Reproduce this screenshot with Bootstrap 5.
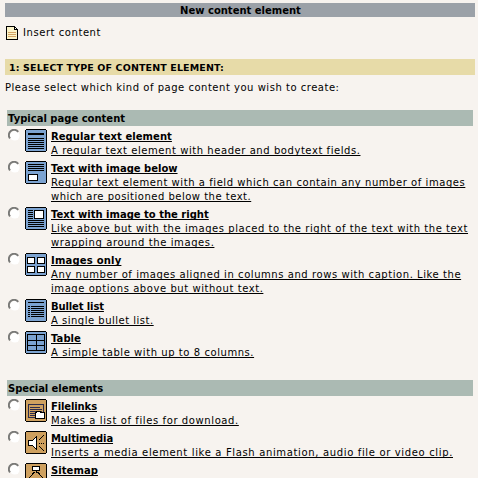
<!DOCTYPE html>
<html lang="en">
<head>
<meta charset="utf-8">
<meta name="viewport" content="width=device-width, initial-scale=1">
<title>New content element</title>
<link href="https://cdn.jsdelivr.net/npm/bootstrap@5.3.0/dist/css/bootstrap.min.css" rel="stylesheet">
<style>
html, body { height: 100%; }
body { font: 10px/14px "DejaVu Sans", sans-serif; letter-spacing: .56px; background: #f7f3ef; color: #000; }
.page { height: 100%; padding: 3px 3px 0 5px; white-space: nowrap; }
b { font-weight: bold; letter-spacing: 0; display: block; }
.titlebar { height: 14px; background: #9ba1a8; padding-top: 1px; letter-spacing: 0; padding-left: 1px; }
.path-row { margin-top: 9px; height: 14px; gap: 5px; padding-left: 1px; }
.step { margin-top: 19px; height: 16px; padding: 2px 4px; background: #e7dba8; font-size: 9.5px; letter-spacing: .125px; }
.intro { margin-top: 6px; letter-spacing: .52px; }
.choices { margin: 15px 2px 0; }
.group-head { height: 16px; padding: 2px 1px; background: #abbab3; letter-spacing: 0; }
.group-head.second { letter-spacing: -.07px; margin-top: 17px; }
.choice { padding: 0 0 4px 1px; color: #000; }
.choices .choice:nth-child(2), .group-head.second + .choice { margin-top: 3px; }
.radio { width: 12px; height: 12px; margin-right: 5px; }
.icon { width: 22px; height: 23px; margin: 0 4px -1px 0; shape-rendering: crispEdges; }
.label { padding-top: 1px; margin-bottom: -1px; text-decoration: underline; text-decoration-thickness: 1px; text-underline-offset: 1px; text-decoration-skip-ink: none; }
.label > * { display: block; height: 14px; }
.label b, .label span { width: max-content; }
.ls-a { letter-spacing: .5px; }
.ls-b { letter-spacing: .6px; }
.ls-c { letter-spacing: .55px; }
.ls-m { letter-spacing: .65px; }
.label b.ls-d { letter-spacing: -.12px; }
.label b.ls-e { letter-spacing: .2px; }
.label b.ls-f { letter-spacing: .06px; }
</style>
</head>
<body class="overflow-hidden">
<svg width="0" height="0" class="position-absolute" aria-hidden="true">
  <defs>
    <symbol id="radio" viewBox="0 0 12 12">
      <circle cx="6.8" cy="6.800" r="4.800" fill="#fff"/>
      <path d="M2 9.400A5 5 0 0 1 10.200 2.800" fill="none" stroke="#7a7a78" stroke-width="2"/>
    </symbol>
    <symbol id="blue" viewBox="0 0 22 23"><path d="M1 0H21V1H22V22H21V23H1V22H0V1H1Z"/><path fill="#7ca3d1" d="M1 1H21V22H1Z"/></symbol>
    <symbol id="tan" viewBox="0 0 22 23"><path d="M1 0H21V1H22V22H21V23H1V22H0V1H1Z"/><path fill="#cea05f" d="M1 1H21V22H1Z"/></symbol>
  </defs>
</svg>
<main class="page">
  <div class="titlebar text-center"><b>New content element</b></div>
  <div class="path-row d-flex align-items-center">
    <svg width="12" height="14" viewBox="0 0 12 14" shape-rendering="crispEdges"><path d="M0 0H9V1H10V2H11V3H12V14H0Z"/><path fill="#fbf3c8" d="M1 1H8V4H11V13H1Z"/><path fill="#fff" d="M9 2H10V3H9Z"/><path fill="#d4a464" d="M2 6H10V7H2ZM2 8H10V9H2ZM2 10H10V11H2Z"/></svg>
    <span>Insert content</span>
  </div>
  <div class="step fw-bold">1: SELECT TYPE OF CONTENT ELEMENT:</div>
  <div class="intro">Please select which kind of page content you wish to create:</div>

  <section class="choices">
    <div class="group-head fw-bold">Typical page content</div>
    <a class="choice d-flex align-items-start text-decoration-none"><svg class="radio flex-shrink-0"><use href="#radio"/></svg>
      <svg class="icon flex-shrink-0" viewBox="0 0 22 23"><use href="#blue"/><path d="M3 4H19V6H3ZM3 9H19V10H3ZM3 11H19V12H3ZM3 13H19V14H3ZM3 15H19V16H3ZM3 17H19V18H3ZM3 19H19V20H3Z"/></svg>
      <div class="label"><b class="ls-f">Regular text element</b><span>A regular text element with header and bodytext fields.</span></div></a>
    <a class="choice d-flex align-items-start text-decoration-none"><svg class="radio flex-shrink-0"><use href="#radio"/></svg>
      <svg class="icon flex-shrink-0" viewBox="0 0 22 23"><use href="#blue"/><path d="M3 3H19V4H3ZM3 5H19V6H3ZM3 7H19V8H3ZM3 9H19V10H3ZM3 13H13V20H3Z"/><path fill="#fff" d="M4 14H12V19H4Z"/></svg>
      <div class="label"><b>Text with image below</b><span>Regular text element with a field which can contain any number of images</span><span class="ls-a">which are positioned below the text.</span></div></a>
    <a class="choice d-flex align-items-start text-decoration-none"><svg class="radio flex-shrink-0"><use href="#radio"/></svg>
      <svg class="icon flex-shrink-0" viewBox="0 0 22 23"><use href="#blue"/><path d="M3 3H8V4H3ZM3 5H8V6H3ZM3 7H8V8H3ZM3 9H8V10H3ZM3 11H8V12H3ZM9 3H19V12H9ZM3 13H19V14H3ZM3 15H19V16H3ZM3 17H19V18H3ZM3 19H19V20H3Z"/><path fill="#fff" d="M10 4H18V11H10Z"/></svg>
      <div class="label"><b>Text with image to the right</b><span class="ls-c">Like above but with the images placed to the right of the text with the text</span><span class="ls-b">wrapping around the images.</span></div></a>
    <a class="choice d-flex align-items-start text-decoration-none"><svg class="radio flex-shrink-0"><use href="#radio"/></svg>
      <svg class="icon flex-shrink-0" viewBox="0 0 22 23"><use href="#blue"/><path d="M2 4H10V11H2ZM12 4H20V11H12ZM2 13H10V20H2ZM12 13H20V20H12Z"/><path fill="#fff" d="M3 5H9V10H3ZM13 5H19V10H13ZM3 14H9V19H3ZM13 14H19V19H13Z"/></svg>
      <div class="label"><b class="ls-e">Images only</b><span>Any number of images aligned in columns and rows with caption. Like the</span><span>image options above but without text.</span></div></a>
    <a class="choice d-flex align-items-start text-decoration-none"><svg class="radio flex-shrink-0"><use href="#radio"/></svg>
      <svg class="icon flex-shrink-0" viewBox="0 0 22 23"><use href="#blue"/><path d="M3 3H19V4H3ZM3 7H5V8H3ZM3 9H5V10H3ZM3 11H5V12H3ZM3 13H5V14H3ZM3 15H5V16H3ZM3 17H5V18H3ZM6 7H19V8H6ZM6 9H19V10H6ZM6 11H19V12H6ZM6 13H19V14H6ZM6 15H19V16H6ZM6 17H19V18H6Z"/></svg>
      <div class="label"><b class="ls-d">Bullet list</b><span class="ls-a">A single bullet list.</span></div></a>
    <a class="choice d-flex align-items-start text-decoration-none"><svg class="radio flex-shrink-0"><use href="#radio"/></svg>
      <svg class="icon flex-shrink-0" viewBox="0 0 22 23"><use href="#blue"/><path fill="none" stroke="#000" d="M2.5 3.5H19.5V19.5H2.5ZM11.5 3V20M2 9.500H20M2 14.500H20"/></svg>
      <div class="label"><b class="ls-f">Table</b><span>A simple table with up to 8 columns.</span></div></a>

    <div class="group-head second fw-bold">Special elements</div>
    <a class="choice d-flex align-items-start text-decoration-none"><svg class="radio flex-shrink-0"><use href="#radio"/></svg>
      <svg class="icon flex-shrink-0" viewBox="0 0 22 23"><use href="#tan"/><path fill="none" stroke="#2c2c4c" d="M3.500 5.500H18.500V18.500H3.500ZM5 8.500H15M5 10.500H17M5 12.500H17M5 14.500H17M5 16.500H12"/><path d="M11 12H16V13H20V20H10V13H11Z"/><path fill="#fff" d="M12 13H15V14H19V19H11V14H12Z"/></svg>
      <div class="label"><b class="ls-d">Filelinks</b><span class="ls-b">Makes a list of files for download.</span></div></a>
    <a class="choice d-flex align-items-start text-decoration-none"><svg class="radio flex-shrink-0"><use href="#radio"/></svg>
      <svg class="icon flex-shrink-0" viewBox="0 0 22 23"><use href="#tan"/><path fill="#fff" stroke="#000" d="M3.500 9.500H7.500L11.500 5.500V18.500L7.500 14.500H3.500Z"/><path d="M14 8H15V9H14ZM15 7H16V8H15ZM16 6H17V7H16ZM17 5H18V6H17ZM18 4H19V5H18ZM14 12H15V13H14ZM16 12H17V13H16ZM18 12H19V13H18ZM14 15H15V16H14ZM15 16H16V17H15ZM16 17H17V18H16ZM17 18H18V19H17ZM18 19H19V20H18Z"/></svg>
      <div class="label"><b class="ls-d">Multimedia</b><span class="ls-m">Inserts a media element like a Flash animation, audio file or video clip.</span></div></a>
    <a class="choice d-flex align-items-start text-decoration-none"><svg class="radio flex-shrink-0"><use href="#radio"/></svg>
      <svg class="icon flex-shrink-0" viewBox="0 0 22 23"><use href="#tan"/><path fill="#fff" stroke="#000" d="M7.500 3.500H14.500V7.500H7.500Z"/><path fill="none" stroke="#000" d="M11 8V10M9.500 9L4 15M12.500 9L18 15M2.500 15.500H8.500V19.500H2.500ZM13.500 15.500H19.500V19.500H13.500Z"/></svg>
      <div class="label"><b class="ls-f">Sitemap</b></div></a>
  </section>
</main>
<script src="https://cdn.jsdelivr.net/npm/bootstrap@5.3.0/dist/js/bootstrap.bundle.min.js"></script>
</body>
</html>
